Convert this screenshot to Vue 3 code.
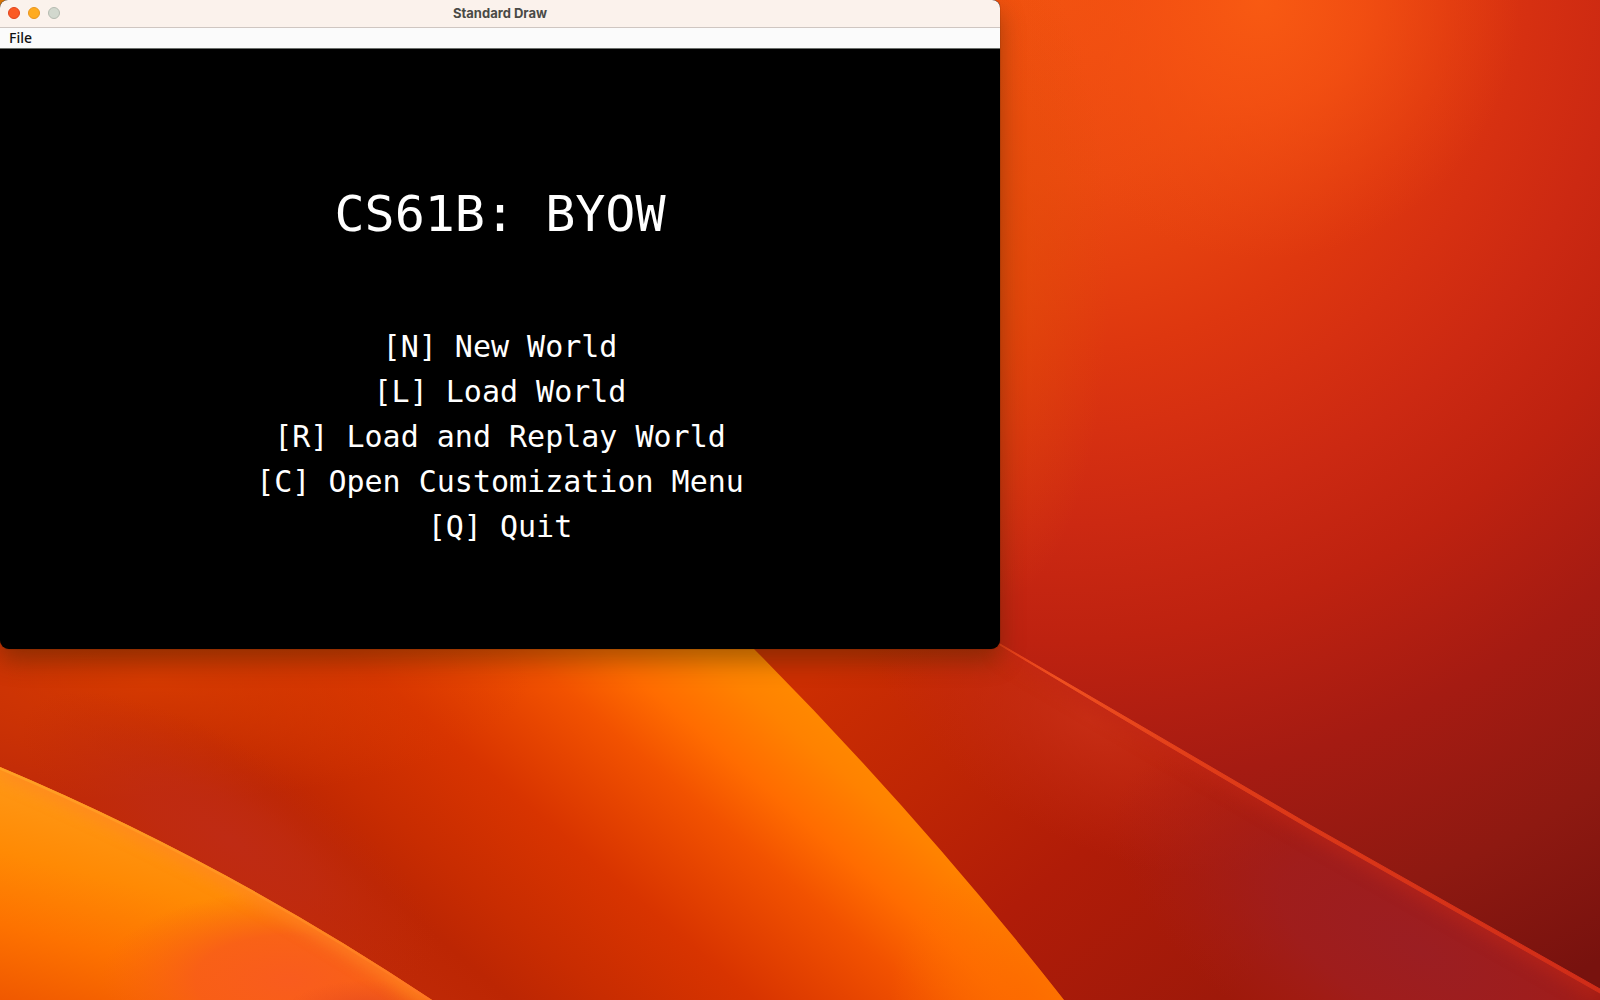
<script setup>
const title = 'CS61B: BYOW'
const options = [
  { key: 'N', label: 'New World' },
  { key: 'L', label: 'Load World' },
  { key: 'R', label: 'Load and Replay World' },
  { key: 'C', label: 'Open Customization Menu' },
  { key: 'Q', label: 'Quit' },
]
</script>

<template>
  <div class="desktop">
    <svg class="wallpaper" viewBox="0 0 1600 1000" preserveAspectRatio="none" aria-hidden="true">
      <defs>
        <radialGradient id="sky" gradientUnits="userSpaceOnUse" cx="1050" cy="-50" r="1150">
          <stop offset="0" stop-color="#f5570f" />
          <stop offset=".1" stop-color="#f15010" />
          <stop offset=".2" stop-color="#ec4a10" />
          <stop offset=".28" stop-color="#e5400f" />
          <stop offset=".35" stop-color="#de370f" />
          <stop offset=".42" stop-color="#d63011" />
          <stop offset=".5" stop-color="#cc2912" />
          <stop offset=".6" stop-color="#be2210" />
          <stop offset=".73" stop-color="#a51b12" />
          <stop offset=".87" stop-color="#8e1911" />
          <stop offset="1" stop-color="#78120e" />
        </radialGradient>
        <radialGradient id="glow">
          <stop offset="0" stop-color="#f85a12" />
          <stop offset=".4" stop-color="#f55212" stop-opacity=".75" />
          <stop offset="1" stop-color="#ec4812" stop-opacity="0" />
        </radialGradient>
        <radialGradient id="edge">
          <stop offset="0" stop-color="#e34e08" stop-opacity=".7" />
          <stop offset="1" stop-color="#e04c08" stop-opacity="0" />
        </radialGradient>
        <linearGradient id="red" gradientUnits="userSpaceOnUse" x1="830" y1="660" x2="1150" y2="1060">
          <stop offset="0" stop-color="#cc2e02" />
          <stop offset=".3" stop-color="#bf2604" />
          <stop offset=".6" stop-color="#b01c08" />
          <stop offset="1" stop-color="#9e190a" />
        </linearGradient>
        <radialGradient id="redLight">
          <stop offset="0" stop-color="#c82e16" stop-opacity=".9" />
          <stop offset="1" stop-color="#c22814" stop-opacity="0" />
        </radialGradient>
        <radialGradient id="plum">
          <stop offset="0" stop-color="#9b1e22" />
          <stop offset=".45" stop-color="#9f1e20" stop-opacity=".8" />
          <stop offset="1" stop-color="#a81e18" stop-opacity="0" />
        </radialGradient>
        <linearGradient id="flame" gradientUnits="userSpaceOnUse" x1="0" y1="671" x2="331" y2="283">
          <stop offset="0" stop-color="#c02a08" />
          <stop offset=".16" stop-color="#bc2603" />
          <stop offset=".28" stop-color="#c82c01" />
          <stop offset=".47" stop-color="#d83400" />
          <stop offset=".59" stop-color="#e64400" />
          <stop offset=".69" stop-color="#f25200" />
          <stop offset=".8" stop-color="#ff6c00" />
          <stop offset=".92" stop-color="#ff8200" />
          <stop offset="1" stop-color="#ff8a00" />
        </linearGradient>
        <radialGradient id="flameTop">
          <stop offset="0" stop-color="#d83c00" stop-opacity=".9" />
          <stop offset="1" stop-color="#d83c00" stop-opacity="0" />
        </radialGradient>
        <radialGradient id="ember">
          <stop offset="0" stop-color="#bf2b14" />
          <stop offset=".4" stop-color="#bf2b12" stop-opacity=".7" />
          <stop offset="1" stop-color="#c02a08" stop-opacity="0" />
        </radialGradient>
        <radialGradient id="fade">
          <stop offset="0" stop-color="#fc6a00" stop-opacity=".8" />
          <stop offset="1" stop-color="#fc7000" stop-opacity="0" />
        </radialGradient>
        <linearGradient id="amber" gradientUnits="userSpaceOnUse" x1="60" y1="780" x2="0" y2="1010">
          <stop offset="0" stop-color="#ff9a18" />
          <stop offset=".35" stop-color="#ff8a04" />
          <stop offset=".65" stop-color="#fd7200" />
          <stop offset="1" stop-color="#ee5500" />
        </linearGradient>
        <radialGradient id="coral">
          <stop offset="0" stop-color="#f95c1e" />
          <stop offset=".5" stop-color="#f85c1a" stop-opacity=".85" />
          <stop offset="1" stop-color="#f86410" stop-opacity="0" />
        </radialGradient>
        <radialGradient id="brick">
          <stop offset="0" stop-color="#e24820" />
          <stop offset="1" stop-color="#e84c20" stop-opacity="0" />
        </radialGradient>
        <linearGradient id="rim" gradientUnits="userSpaceOnUse" x1="0" y1="767" x2="432" y2="1000">
          <stop offset="0" stop-color="#ffa024" />
          <stop offset=".5" stop-color="#ff9420" />
          <stop offset="1" stop-color="#ff7422" />
        </linearGradient>
        <linearGradient id="ridge" gradientUnits="userSpaceOnUse" x1="1000" y1="644" x2="1600" y2="990">
          <stop offset="0" stop-color="#e23c18" />
          <stop offset=".1" stop-color="#f05020" />
          <stop offset=".35" stop-color="#e03c18" />
          <stop offset="1" stop-color="#d02c18" />
        </linearGradient>
        <filter id="haze" filterUnits="userSpaceOnUse" x="-100" y="500" width="1900" height="700" color-interpolation-filters="sRGB">
          <feGaussianBlur stdDeviation="8" />
        </filter>
        <clipPath id="redClip">
          <path d="M740 630H976L1000 644L1157 736L1310 826L1600 990V1010H1064L740 640Z" />
        </clipPath>
        <clipPath id="flameClip">
          <path d="M0 600H706L754 649Q920 816 1064 1000H0Z" />
        </clipPath>
        <clipPath id="amberClip">
          <path d="M0 767Q225 862 432 1000H0Z" />
        </clipPath>
      </defs>

      <rect width="1600" height="1000" fill="url(#sky)" />
      <rect width="20" height="20" fill="#df7a08" />
      <ellipse cx="1260" cy="0" rx="260" ry="260" fill="url(#glow)" />
      <ellipse cx="1000" cy="270" rx="110" ry="330" fill="url(#edge)" />

      <g clip-path="url(#redClip)">
        <rect x="700" y="600" width="900" height="400" fill="url(#red)" />
        <ellipse cx="1090" cy="720" rx="240" ry="120" fill="url(#redLight)" transform="rotate(28 1090 720)" />
        <ellipse cx="1420" cy="950" rx="340" ry="150" fill="url(#plum)" transform="rotate(28 1420 950)" />
        <path d="M1000 644L1157 736L1310 826L1600 990" fill="none" stroke="#c42818" stroke-width="20" opacity=".5" filter="url(#haze)" />
      </g>
      <path d="M1000 644Q1155 734 1310 825L1600 989V993L1310 829Q1155 739 1000 645Z" fill="url(#ridge)" stroke="url(#ridge)" stroke-width="1" />

      <g clip-path="url(#flameClip)">
        <rect y="600" width="1100" height="400" fill="url(#flame)" />
        <ellipse cx="150" cy="680" rx="380" ry="120" fill="url(#flameTop)" />
        <ellipse cx="230" cy="840" rx="240" ry="90" fill="url(#ember)" transform="rotate(32 230 840)" />
        <ellipse cx="1020" cy="1000" rx="130" ry="150" fill="url(#fade)" />
      </g>

      <g clip-path="url(#amberClip)">
        <rect y="750" width="450" height="250" fill="url(#amber)" />
        <ellipse cx="290" cy="980" rx="190" ry="90" fill="url(#coral)" />
        <ellipse cx="370" cy="1016" rx="90" ry="36" fill="url(#brick)" />
        <path d="M0 767Q225 862 432 1000" fill="none" stroke="#ff8524" stroke-width="16" opacity=".8" filter="url(#haze)" />
        <path d="M0 767Q225 862 432 1000" fill="none" stroke="url(#rim)" stroke-width="5" />
      </g>
    </svg>

    <main class="window">
      <header class="titlebar">
        <div class="lights">
          <button class="light close" type="button" aria-label="Close"></button>
          <button class="light minimize" type="button" aria-label="Minimize"></button>
          <button class="light zoom" type="button" aria-label="Zoom" disabled></button>
        </div>
        <span class="caption">Standard Draw</span>
      </header>
      <nav class="menubar">
        <button class="menu" type="button">File</button>
      </nav>
      <section class="canvas">
        <h1>{{ title }}</h1>
        <ul>
          <li v-for="option in options" :key="option.key">[{{ option.key }}] {{ option.label }}</li>
        </ul>
      </section>
    </main>
  </div>
</template>

<style>
body {
  margin: 0;
}
</style>

<style scoped>
.desktop {
  position: relative;
  min-height: 100vh;
  overflow: hidden;
}

.wallpaper {
  position: absolute;
  inset: 0;
  width: 100%;
  height: 100%;
}

.window {
  position: relative;
  box-sizing: border-box;
  width: 62.5%;
  min-width: 560px;
  overflow: hidden;
  border-radius: 8px 8px 9px 9px;
  background: #000;
  box-shadow: 0 12px 24px rgba(70, 40, 0, 0.45), 0 0 1px #301008;
}

.titlebar {
  box-sizing: border-box;
  display: grid;
  grid-template-columns: 1fr auto 1fr;
  align-items: center;
  height: 28px;
  padding-bottom: 1px;
  border-bottom: 1px solid #cfc6c1;
  background: #fbf2ec;
}

.lights {
  display: flex;
  gap: 8px;
  padding-left: 8px;
}

.light {
  box-sizing: border-box;
  width: 12px;
  height: 12px;
  padding: 0;
  border: 1px solid;
  border-radius: 50%;
}

.close {
  border-color: #e0431c;
  background: #fb5a24;
}

.minimize {
  border-color: #e8951c;
  background: #ffab20;
}

.zoom {
  border-color: #b4bab0;
  background: #d2d8ce;
}

.caption {
  color: #4a4a46;
  font: 700 13px/20px Inter, "Liberation Sans", sans-serif;
}

.menubar {
  box-sizing: border-box;
  display: flex;
  height: 21px;
  padding-left: 9px;
  border-bottom: 1px solid #6c706c;
  background: #fbfbfb;
}

.menu {
  padding: 0;
  border: 0;
  background: none;
  color: #111;
  font: 500 14px/20px "Noto Sans", "Open Sans", sans-serif;
}

.canvas {
  box-sizing: border-box;
  display: flex;
  flex-direction: column;
  align-items: center;
  gap: 80px;
  aspect-ratio: 5 / 3;
  padding-top: 135px;
  color: #fff;
  font-family: "DejaVu Sans Mono", "Liberation Mono", monospace;
  text-align: center;
}

h1 {
  margin: 0;
  font-size: 50px;
  font-weight: 400;
  line-height: 60px;
}

ul {
  margin: 0;
  padding: 0;
  list-style: none;
  font-size: 30px;
  line-height: 45px;
}
</style>
